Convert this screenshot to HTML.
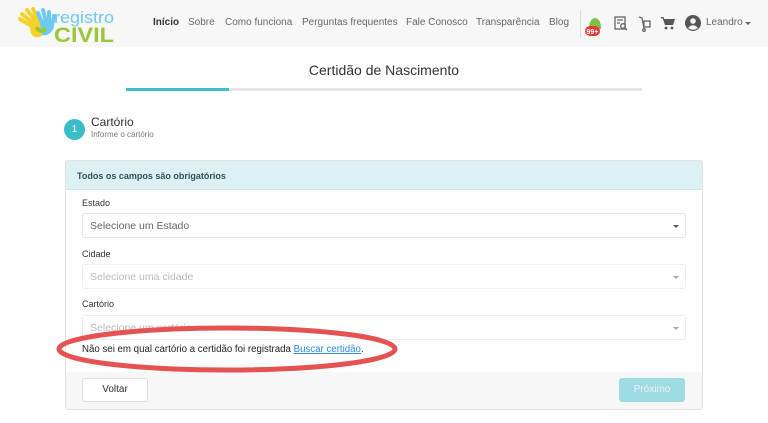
<!DOCTYPE html>
<html><head><meta charset="utf-8"><style>
*{box-sizing:border-box;margin:0;padding:0}
body{width:768px;height:423px;overflow:hidden;background:#fff;font-family:"Liberation Sans",sans-serif;position:relative;color:#333}
.hdr{position:absolute;left:0;top:0;width:768px;height:47px;background:#f7f7f7}
.nav{position:absolute;top:17px;font-size:10px;color:#666}
.a{position:absolute}
.inp{position:absolute;left:82px;width:604px;height:25px;border:1px solid #e3e3e3;border-radius:3px;font-size:10.5px;color:#666;padding:6px 7px}
.inp.d{color:#bbb;border-color:#eee}
.car{position:absolute;right:6px;top:11px;border:3px solid transparent;border-top:3px solid #555;border-bottom:0}
.d .car{border-top-color:#aaa}
.lbl{position:absolute;left:82px;font-size:9px;color:#333}
</style></head><body>
<div class="hdr">
 <svg class="a" style="left:16px;top:5px" width="100" height="38">
  <path d="M4 14 L14 20 M6 9 L16 17 M11 5 L19 15 M17 4 L22 14" stroke="#f5d22a" stroke-width="4" stroke-linecap="round"/>
  <path d="M14 22 Q20 12 30 16 Q34 26 24 32 Q14 34 14 22Z" fill="#f5d22a"/>
  <path d="M22 8 L26 18 M27 5 L30 17 M33 7 L33 18 M38 11 L36 20" stroke="#6ccbed" stroke-width="4" stroke-linecap="round"/>
  <path d="M24 18 Q36 14 38 22 Q34 32 26 30Z" fill="#6ccbed"/>
  <path d="M20 22 Q24 28 30 24" stroke="#9bc63b" stroke-width="4" fill="none"/>
  <text x="38" y="18" font-size="17" fill="#6ccbed" font-family="Liberation Sans" textLength="60" lengthAdjust="spacingAndGlyphs">registro</text>
  <text x="38" y="37" font-size="21" font-weight="bold" fill="#9bc63b" font-family="Liberation Sans" textLength="60" lengthAdjust="spacingAndGlyphs">CIVIL</text>
 </svg>
 <span class="nav" style="left:153px;color:#333;font-weight:bold">Início</span>
 <span class="nav" style="left:188px">Sobre</span>
 <span class="nav" style="left:225px">Como funciona</span>
 <span class="nav" style="left:302px">Perguntas frequentes</span>
 <span class="nav" style="left:406px">Fale Conosco</span>
 <span class="nav" style="left:476px">Transparência</span>
 <span class="nav" style="left:549px">Blog</span>
 <div class="a" style="left:580px;top:10px;width:1px;height:28px;background:#ddd"></div>
 <svg class="a" style="left:585px;top:15px" width="20" height="24"><path d="M4 14 Q4 4 10 3 Q16 4 16 14Z" fill="#7cc142"/><rect x="0" y="11" width="15" height="10" rx="5" fill="#e53935"/><text x="1.5" y="19" font-size="7" fill="#fff" font-family="Liberation Sans" font-weight="bold">99+</text></svg>
 <svg class="a" style="left:614px;top:16px" width="14" height="15" fill="none" stroke="#666" stroke-width="1.3"><rect x="1" y="1" width="10" height="12"/><path d="M3 4h6M3 7h3"/><circle cx="9" cy="10" r="2.3"/><path d="M10.6 11.6 13 14"/></svg>
 <svg class="a" style="left:638px;top:16px" width="14" height="16" fill="none" stroke="#666" stroke-width="1.3"><path d="M1 1 L4 2 L6 12"/><rect x="6" y="5" width="6" height="6"/><circle cx="6" cy="14" r="1.3"/></svg>
 <svg class="a" style="left:661px;top:17px" width="14" height="13" fill="#555"><path d="M0 0h2.5l.7 2H14l-2 6H4L1.7 1.4H0Z"/><circle cx="5" cy="11" r="1.4"/><circle cx="11" cy="11" r="1.4"/></svg>
 <svg class="a" style="left:685px;top:15px" width="16" height="16"><circle cx="8" cy="8" r="8" fill="#555"/><circle cx="8" cy="6" r="2.8" fill="#f7f7f7"/><path d="M3 13 Q8 7.5 13 13 Q8 16.5 3 13Z" fill="#f7f7f7"/></svg>
 <span class="nav" style="left:706px">Leandro</span>
 <div class="a" style="left:745px;top:22px;border:3px solid transparent;border-top:3px solid #666;border-bottom:0"></div>
</div>
<div class="a" style="left:0;width:768px;top:62px;text-align:center;font-size:14px;color:#333">Certidão de Nascimento</div>
<div class="a" style="left:126px;top:88px;width:516px;height:3px;background:#e6e6e6"></div>
<div class="a" style="left:126px;top:88px;width:103px;height:3px;background:#3bbfcf"></div>
<div class="a" style="left:64px;top:119px;width:21px;height:21px;border-radius:50%;background:#3bbcc8;color:#fff;font-size:10px;text-align:center;line-height:21px">1</div>
<div class="a" style="left:91px;top:115px;font-size:12px;color:#333">Cartório</div>
<div class="a" style="left:91px;top:130px;font-size:8px;color:#777">Informe o cartório</div>
<div class="a" style="left:65px;top:160px;width:638px;height:250px;border:1px solid #e2e2e2;border-radius:3px;overflow:hidden">
 <div style="height:29px;background:#ddf0f4;border-bottom:1px solid #d0e6ea;font-size:9px;font-weight:bold;color:#31505a;padding:10px 11px">Todos os campos são obrigatórios</div>
 <div class="a" style="left:0;top:211px;width:638px;height:40px;background:#f7f7f7"></div>
</div>
<div class="lbl" style="top:198px">Estado</div>
<div class="inp" style="top:213px">Selecione um Estado<div class="car"></div></div>
<div class="lbl" style="top:249px">Cidade</div>
<div class="inp d" style="top:264px">Selecione uma cidade<div class="car"></div></div>
<div class="lbl" style="top:299px">Cartório</div>
<div class="inp d" style="top:315px">Selecione um cartório<div class="car"></div></div>
<div class="a" style="left:82px;top:344px;font-size:9.7px;color:#222">Não sei em qual cartório a certidão foi registrada <span style="color:#2a8ae8;text-decoration:underline">Buscar certidão</span>.</div>
<div class="a" style="left:82px;top:378px;width:66px;height:24px;border:1px solid #ddd;border-radius:3px;background:#fff;font-size:10px;text-align:center;line-height:22px;color:#333">Voltar</div>
<div class="a" style="left:619px;top:378px;width:66px;height:24px;border-radius:3px;background:#9edbe2;font-size:10px;text-align:center;line-height:24px;color:#eef">Próximo</div>
<svg class="a" style="left:0;top:0" width="768" height="423"><ellipse cx="227" cy="349" rx="168" ry="21" fill="none" stroke="#e45252" stroke-width="5"/></svg>
</body></html>
